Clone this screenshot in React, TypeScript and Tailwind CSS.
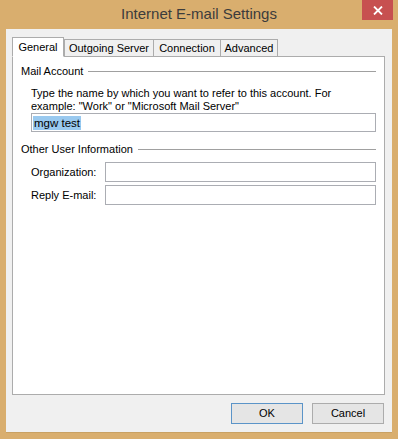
import React from 'react'

const font = { fontFamily: '"Liberation Sans", Arial, sans-serif' }

const Tab = ({ label, width, active }: { label: string; width: string; active?: boolean }) =>
  active ? (
    <div className={`relative z-10 -mb-px h-[20px] ${width} flex items-center justify-center bg-white border border-[#acacac] border-b-white text-[11px] text-black`}>
      {label}
    </div>
  ) : (
    <div className={`h-[17px] ${width} -ml-px first:ml-0 flex items-center justify-center bg-[#f0f0f0] border border-[#acacac] border-b-0 text-[11px] text-black`}>
      {label}
    </div>
  )

const GroupTitle = ({ title }: { title: string }) => (
  <div className="flex items-center gap-[5px] pr-[8px]">
    <span className="text-[11px] text-black leading-none">{title}</span>
    <div className="flex-1 h-px bg-[#a0a0a0]" />
  </div>
)

const Field = ({ label }: { label: string }) => (
  <div className="flex items-center">
    <span className="w-[74px] text-[11px] text-black">{label}</span>
    <div className="w-[271px] h-[20px] bg-white border border-[#abadb3]" />
  </div>
)

const Button = ({ label, isDefault }: { label: string; isDefault?: boolean }) => (
  <button
    className={`w-[72px] h-[21px] text-[11px] text-black bg-[#e5e5e5] border ${
      isDefault ? 'border-[#5b94c8]' : 'border-[#acacac]'
    }`}
  >
    {label}
  </button>
)

export default function App() {
  return (
    <div className="w-[398px] h-[439px] bg-[#d9ae6e] flex flex-col" style={font}>
      <div className="relative h-[29px] flex items-center justify-center">
        <span className="text-[15px] text-[#3c3c3c] -mt-[1px]">Internet E-mail Settings</span>
        <div className="absolute right-[5px] top-0 w-[31px] h-[20px] bg-[#c75050] flex items-center justify-center">
          <svg width="10" height="9" viewBox="0 0 10 9">
            <path d="M1 0.5 L9 8.5 M9 0.5 L1 8.5" stroke="white" strokeWidth="1.8" />
          </svg>
        </div>
      </div>
      <div className="mx-[6px] mb-[6px] flex-1 bg-[#f0f0f0] border-b border-[#c9a163] flex flex-col pl-[6px] pr-[7px] pt-[8px]">
        <div className="flex items-end">
          <Tab label="General" width="w-[52px]" active />
          <div className="flex items-end">
            <Tab label="Outgoing Server" width="w-[90px]" />
            <Tab label="Connection" width="w-[68px]" />
            <Tab label="Advanced" width="w-[58px]" />
          </div>
        </div>
        <div className="h-[339px] bg-white border border-[#acacac] pl-[8px] pt-[9px] flex flex-col">
          <GroupTitle title="Mail Account" />
          <div className="pl-[10px] mt-[10px] text-[11px] leading-[12.5px] text-black">
            Type the name by which you want to refer to this account. For
            <br />
            example: "Work" or "Microsoft Mail Server"
          </div>
          <div className="ml-[10px] mt-[1px] w-[345px] h-[19px] bg-white border border-[#abadb3] flex items-center pl-px">
            <span className="bg-[#99c9ef] text-[11.5px] text-black leading-[14px] px-px">mgw test</span>
          </div>
          <div className="mt-[12px]">
            <GroupTitle title="Other User Information" />
          </div>
          <div className="pl-[10px] mt-[7px] flex flex-col gap-[3px]">
            <Field label="Organization:" />
            <Field label="Reply E-mail:" />
          </div>
        </div>
        <div className="flex justify-end gap-[9px] mt-[8px] pr-px">
          <Button label="OK" isDefault />
          <Button label="Cancel" />
        </div>
      </div>
    </div>
  )
}
